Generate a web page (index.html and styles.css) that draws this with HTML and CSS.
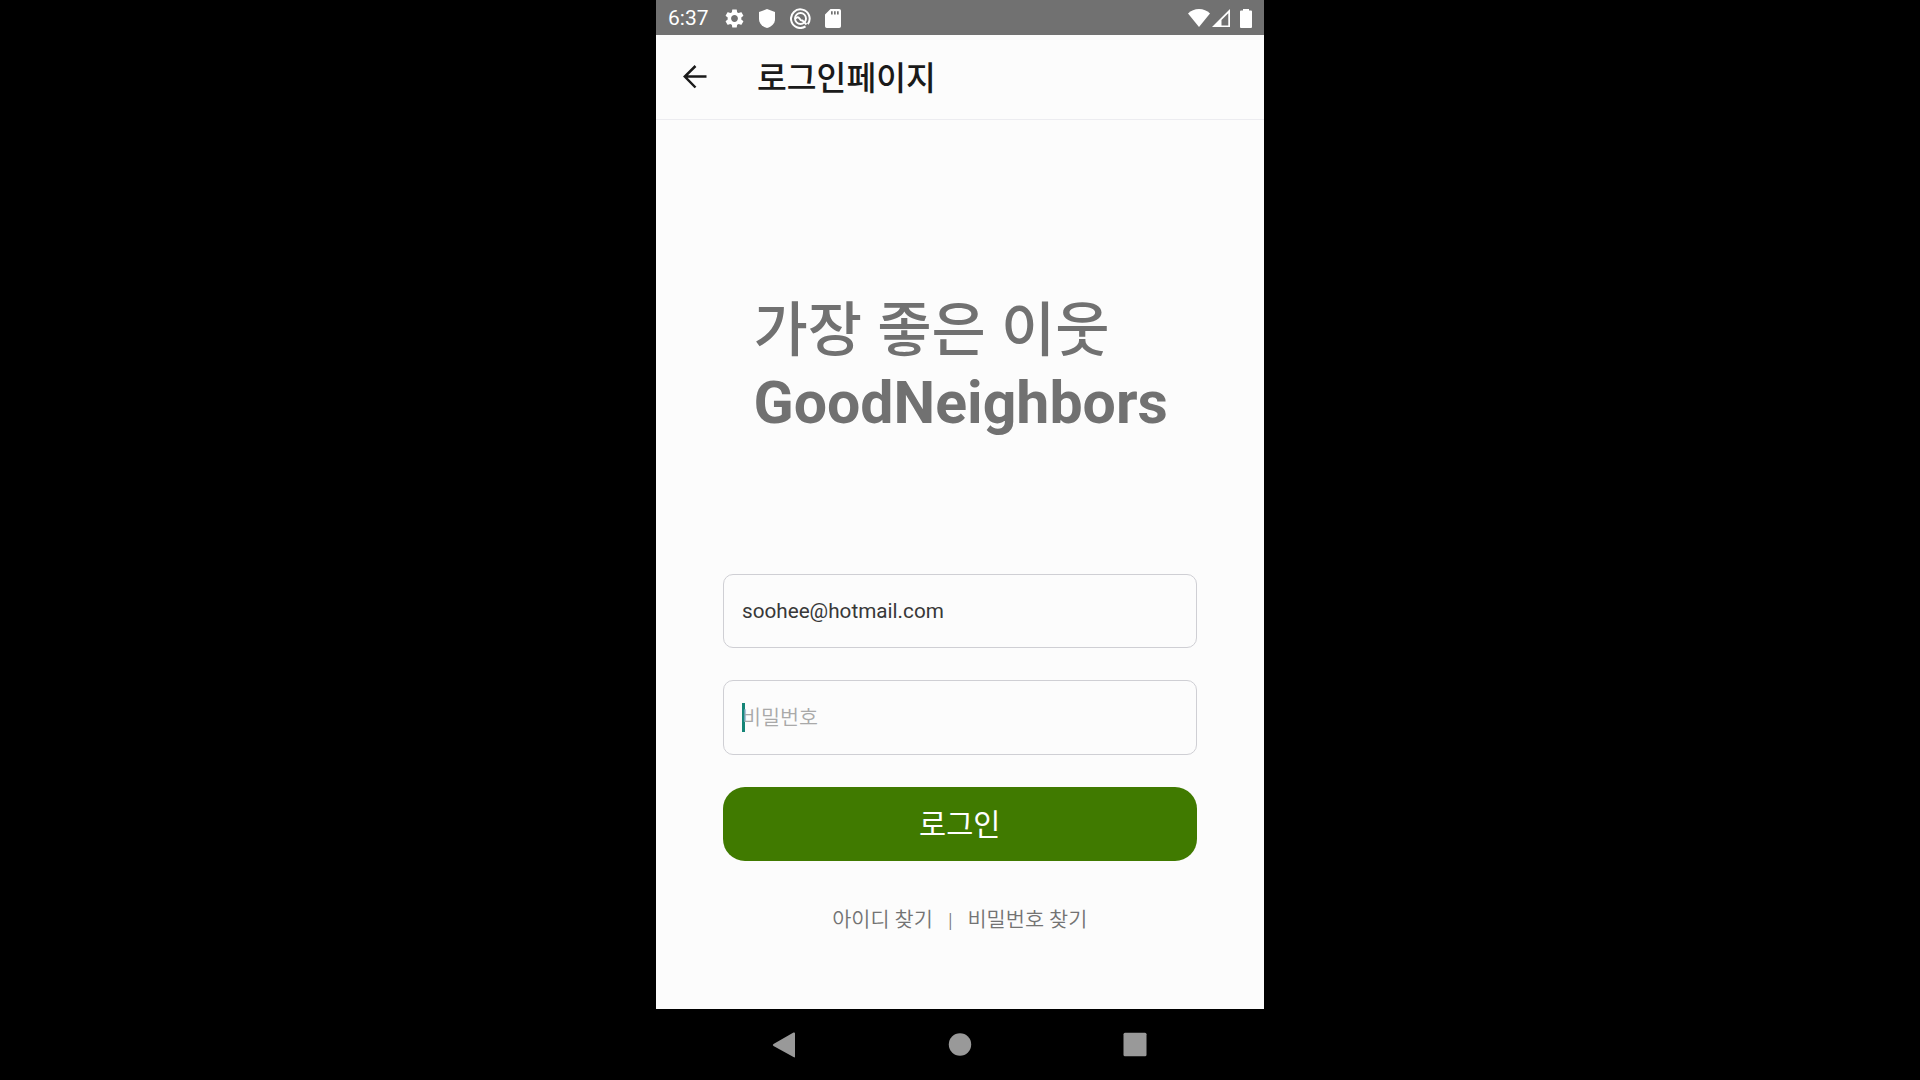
FILE: index.html
```html
<!DOCTYPE html>
<html lang="ko">
<head>
<meta charset="utf-8">
<title>로그인페이지</title>
<link rel="stylesheet" href="styles.css">
</head>
<body>
<div class="phone">
  <div class="status-bar">
    <span class="clock">6:37</span>
    <div class="notifications">
      <svg class="gear" viewBox="2 2 20 20"><path d="M19.14 12.94c.04-.3.06-.61.06-.94 0-.32-.02-.64-.07-.94l2.03-1.58c.18-.14.23-.41.12-.61l-1.92-3.32c-.12-.22-.37-.29-.59-.22l-2.39.96c-.5-.38-1.03-.7-1.62-.94l-.36-2.54c-.04-.24-.24-.41-.48-.41h-3.84c-.24 0-.43.17-.47.41l-.36 2.54c-.59.24-1.13.57-1.62.94l-2.39-.96c-.22-.08-.47 0-.59.22L2.74 8.87c-.12.21-.08.47.12.61l2.03 1.58c-.05.3-.09.63-.09.94s.02.64.07.94l-2.03 1.58c-.18.14-.23.41-.12.61l1.92 3.32c.12.22.37.29.59.22l2.39-.96c.5.38 1.03.7 1.62.94l.36 2.54c.05.24.24.41.48.41h3.84c.24 0 .44-.17.47-.41l.36-2.54c.59-.24 1.13-.56 1.62-.94l2.39.96c.22.08.47 0 .59-.22l1.92-3.32c.12-.22.07-.47-.12-.61l-2.01-1.58zM12 15.6c-1.98 0-3.6-1.62-3.6-3.6s1.62-3.6 3.6-3.6 3.6 1.62 3.6 3.6-1.62 3.6-3.6 3.6z"/></svg>
      <svg class="shield" viewBox="0 0 16 19"><path d="M8 0l8 3v7c0 4.600-3.400 7.700-8 9-4.600-1.300-8-4.400-8-9V3z"/></svg>
      <svg class="badge" viewBox="0 0 21 21"><g fill="none" stroke="#fff"><path d="M17.800 16.200A9.300 9.300 0 1 0 15.500 18.400" stroke-width="2"/><circle cx="10.500" cy="10.500" r="5.500" stroke-width="1.900"/><path d="M5.500 10.500Q8 8 9.500 10.500T12.500 12.500L16.500 16.500" stroke-width="1.900"/></g></svg>
      <svg class="card" viewBox="0 0 16 19"><path fill-rule="evenodd" d="M5.500 0H14.200Q16 0 16 1.800V17.200Q16 19 14.200 19H1.800Q0 19 0 17.200V5.500zM6 2.200v3.200h1.700V2.200zM9 2.200v3.200h1.700V2.200zM12 2.200v3.200h1.700V2.200z"/></svg>
    </div>
    <div class="signals">
      <svg class="wifi" viewBox="0 0 22 18"><path d="M0 4.500Q4.500 0 11 0T22 4.500L11 18z"/></svg>
      <svg class="cell" viewBox="0 0 18 18"><path fill-rule="evenodd" d="M18 0V18H0zM16.300 4.200L9.500 11v5.500h6.800z"/></svg>
      <svg class="battery" viewBox="0 0 12 19"><path d="M3 1.500V0h6v1.500h2q1 0 1 1V18q0 1-1 1H1q-1 0-1-1V2.500q0-1 1-1z"/></svg>
    </div>
  </div>
  <header class="app-bar">
    <svg class="back" viewBox="0 0 24 24"><path d="M23.500 11.500H2M12.500 1L1.800 11.500l10.700 11"/></svg>
    <h1 class="page-title">로그인페이지</h1>
  </header>
  <main class="login">
    <h2 class="brand"><span class="slogan">가장 좋은 이웃</span><br>GoodNeighbors</h2>
    <div class="field">soohee@hotmail.com</div>
    <div class="field field-empty"><span class="caret"></span><span class="placeholder">비밀번호</span></div>
    <button class="submit">로그인</button>
    <nav class="links"><a>아이디 찾기</a><span class="divider">|</span><a>비밀번호 찾기</a></nav>
  </main>
</div>
<footer class="system-nav">
  <svg class="nav-icon" viewBox="0 0 24 26"><path d="M20.500 .5Q22 0 22 1.500V24.500Q22 26 20.500 25L.5 14Q-1 13 .5 12z"/></svg>
  <svg class="nav-icon" viewBox="0 0 24 26"><circle cx="12" cy="12.500" r="11.200"/></svg>
  <svg class="nav-icon" viewBox="0 0 24 26"><rect x=".5" y=".7" width="23" height="23.500" rx="1.500"/></svg>
</footer>
</body>
</html>
```
FILE: styles.css
```css
* { box-sizing: border-box; }
body {
  margin: 0;
  height: 1080px;
  overflow: hidden;
  background: #000;
  font-family: Roboto, "Noto Sans CJK KR", sans-serif;
  display: flex;
  flex-direction: column;
  align-items: center;
}
svg { display: block; }
.phone {
  width: 608px;
  height: 1009px;
  background: #fcfcfc;
  display: flex;
  flex-direction: column;
}
.status-bar {
  height: 35px;
  flex: none;
  background: #717171;
  color: #fff;
  fill: #fff;
  display: flex;
  align-items: center;
  padding: 1px 12px 0 12px;
}
.clock { width: 57px; font-size: 21px; line-height: 37px; padding-top: 1px; }
.notifications, .signals { display: flex; align-items: center; }
.signals { margin-left: auto; }
.gear { width: 19px; height: 19px; }
.shield { width: 16px; height: 19px; margin-left: 15px; }
.badge { width: 21px; height: 21px; margin-left: 15px; }
.card { width: 16px; height: 19px; margin-left: 14px; }
.wifi { width: 22px; height: 18px; }
.cell { width: 18px; height: 18px; margin-left: 2px; }
.battery { width: 12px; height: 19px; margin-left: 10px; }
.app-bar {
  height: 85px;
  flex: none;
  border-bottom: 1px solid #ececf0;
  display: flex;
  align-items: center;
  padding-left: 27px;
}
.back { width: 24px; height: 24px; fill: none; stroke: #1a1a1a; stroke-width: 2.5; }
.page-title {
  margin: 4px 0 0 50px;
  font-size: 32.4px;
  line-height: 40px;
  font-weight: 500;
  color: #1a1a1a;
}
.login {
  padding: 175px 67px 0 66.5px;
  display: flex;
  flex-direction: column;
}
.brand {
  margin: 0 0 135px 31px;
  font-size: 59px;
  line-height: 72px;
  font-weight: 700;
  color: #717171;
  white-space: nowrap;
}
.slogan { font-weight: 500; word-spacing: 0.5px; }
.field {
  height: 74px;
  margin: 0 0 32.5px;
  padding-left: 18.5px;
  border: 1px solid #cfcfd4;
  border-radius: 10px;
  display: flex;
  align-items: center;
  font-size: 20.7px;
  color: #383838;
}
.field-empty { height: 75px; margin: -0.5px 0 32px; color: #a9a9a9; }
.placeholder { font-weight: 350; line-height: 30px; margin-top: 1px; }
.caret { width: 3px; height: 29px; margin-right: -3px; background: #158577; }
.submit {
  height: 74px;
  padding: 0 0 4px;
  border: 0;
  border-radius: 22px;
  background: #407a00;
  color: #fff;
  font: inherit;
  font-size: 29.5px;
}
.links {
  margin-top: 44px;
  display: flex;
  justify-content: center;
  gap: 15px;
  font-size: 20.8px;
  line-height: 30px;
  font-weight: 350;
  color: #737373;
}
.divider { padding-top: 1px; }
.system-nav {
  width: 374px;
  height: 71px;
  display: flex;
  justify-content: space-between;
  align-items: center;
  fill: #999;
}
.nav-icon { width: 24px; height: 26px; overflow: visible; }
```
